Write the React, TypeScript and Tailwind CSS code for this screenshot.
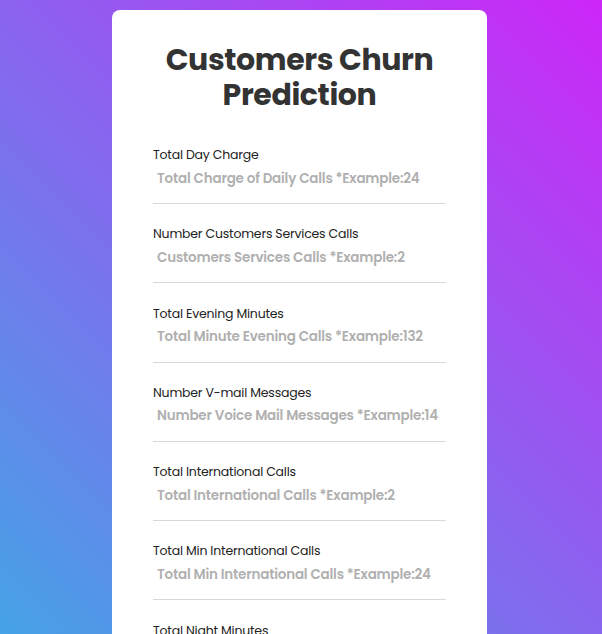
import React from "react";

const fields = [
  ["Total Day Charge", "Total Charge of Daily Calls *Example:24"],
  ["Number Customers Services Calls", "Customers Services Calls *Example:2"],
  ["Total Evening Minutes", "Total Minute Evening Calls *Example:132"],
  ["Number V-mail Messages", "Number Voice Mail Messages *Example:14"],
  ["Total International Calls", "Total International Calls *Example:2"],
  ["Total Min International Calls", "Total Min International Calls *Example:24"],
  ["Total Night Minutes", "Total Night Minutes *Example:200"],
  ["Total Day Minutes", "Total Day Minutes *Example:180"],
];

export default function App() {
  return (
    <div
      className="w-full h-[634px] overflow-hidden flex justify-center pt-[10px] pr-[3px] bg-[linear-gradient(45deg,#45a3e6,#cd26f7)]"
      style={{ fontFamily: '"Poppins", "Inter", "Noto Sans", sans-serif' }}
    >
      <div className="w-[375px] bg-white rounded-[8px] px-[41px] pt-[32px] pb-10 self-start">
        <h1 className="text-center text-[30px] leading-[35px] font-bold text-[#333] tracking-[-0.4px]">
          Customers Churn
          <br />
          Prediction
        </h1>
        <div className="mt-[34px] flex flex-col gap-[21.3px]">
          {fields.map(([label, ph]) => (
            <div key={label} className="flex flex-col">
              <label className="text-[12.5px] leading-[18px] text-[#222] tracking-[-0.2px]">{label}</label>
              <input
                placeholder={ph}
                className="h-[40px] pb-[10px] pl-1 border-b border-[#d8d8d8] outline-none text-[13.5px] font-semibold text-[#333] placeholder:text-[#b0b0b0] tracking-[-0.2px]"
              />
            </div>
          ))}
        </div>
      </div>
    </div>
  );
}
